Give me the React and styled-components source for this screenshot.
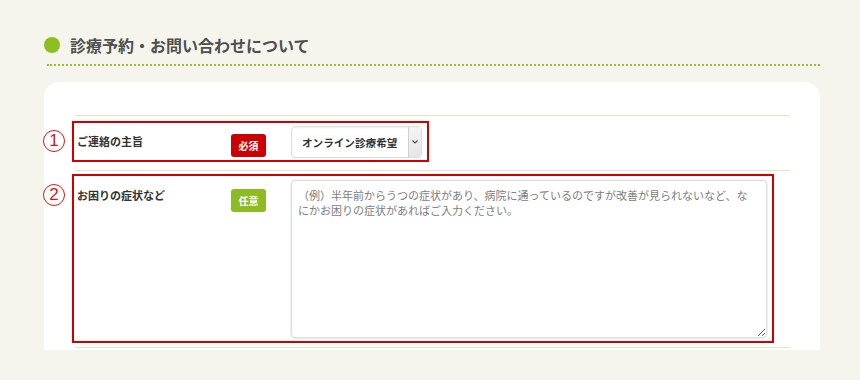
import React from 'react'
import styled, { createGlobalStyle } from 'styled-components'

const GlobalStyle = createGlobalStyle`
  body {
    margin: 0;
    background: #f5f4ed;
    font-family: "Noto Sans CJK JP", "Noto Sans", sans-serif;
    color: #333;
  }
`

const Page = styled.div`
  padding: 28px 40px 0 44px;
  width: 776px;
`

const Heading = styled.h2`
  display: flex;
  align-items: center;
  gap: 10px;
  margin: 0;
  height: 34px;
  font-size: 16px;
  font-weight: 700;
  color: #4f4f4f;
`

const Dot = styled.span`
  width: 16px;
  height: 16px;
  border-radius: 50%;
  background: #8cbf1f;
  flex-shrink: 0;
`

const DottedRule = styled.div`
  margin: 2px 0 0 3px;
  border-top: 2px dotted #93c42a;
`

const Card = styled.div`
  margin-top: 16px;
  background: #fff;
  border-radius: 15px 15px 0 0;
  padding: 33px 30px 2px 31px;
`

const Row = styled.div`
  position: relative;
  border-top: 1px solid #dfe9bd;
  padding: ${p => p.$top}px 0 ${p => p.$bottom}px;

  &:last-child {
    border-bottom: 1px solid #dfe9bd;
  }
`

const Num = styled.span`
  position: absolute;
  left: -32px;
  top: ${p => p.$top}px;
  width: 20px;
  height: 20px;
  border: 1px solid #cc1b1b;
  border-radius: 50%;
  color: #cc1b1b;
  font-family: "Liberation Sans", sans-serif;
  font-size: 17px;
  line-height: 20px;
  text-align: center;
`

const Highlight = styled.div`
  display: inline-flex;
  align-items: flex-start;
  margin-left: -3px;
  padding: ${p => p.$padTop}px 5px ${p => p.$padBottom}px 3px;
  border: 2px solid #cc0000;
`

const Label = styled.div`
  width: 154px;
  padding-top: 7px;
  font-size: 11px;
  font-weight: 700;
  color: #333;
  line-height: 16px;
`

const BadgeCell = styled.div`
  width: 60px;
  padding-top: ${p => p.$top}px;
`

const Badge = styled.span`
  display: inline-flex;
  align-items: center;
  justify-content: center;
  width: 35px;
  height: 23px;
  border-radius: 3px;
  background: ${p => (p.$required ? '#cc0000' : '#8cbc22')};
  color: #fff;
  font-size: 10px;
  font-weight: 700;
`

const SelectBox = styled.div`
  display: flex;
  width: 131px;
  height: 32px;
  box-sizing: border-box;
  border: 1px solid #dcdcdc;
  border-radius: 4px;
  background: #fff;
  box-shadow: inset 0 1px 2px rgba(0, 0, 0, 0.06);
  overflow: hidden;
`

const Select = styled.select`
  flex: 1;
  min-width: 0;
  appearance: none;
  border: none;
  background: transparent;
  padding: 0 0 0 10px;
  font-family: "Noto Sans CJK JP", sans-serif;
  font-size: 10.6px;
  font-weight: 700;
  color: #333;
  outline: none;
`

const Arrow = styled.span`
  display: flex;
  align-items: center;
  justify-content: center;
  width: 12px;
  border-left: 1px solid #d0d0d0;
  background: linear-gradient(#f4f4f4, #e6e6e6);
`

const TextArea = styled.textarea`
  display: block;
  width: 476px;
  height: 158px;
  box-sizing: border-box;
  margin: 0;
  padding: 7px 12px 7px 6px;
  border: 1px solid #dedede;
  border-radius: 4px;
  box-shadow: 0 0 0 1px #f1f1f1;
  font-family: "Noto Sans CJK JP", sans-serif;
  font-size: 11px;
  line-height: 15px;
  color: #333;
  outline: none;

  &::placeholder {
    color: #7d7d7d;
  }
`

const App = () => {
    return (
        <>
            <GlobalStyle />
            <Page>
                <Heading>
                    <Dot />
                    診療予約・お問い合わせについて
                </Heading>
                <DottedRule />
                <Card>
                    <Row $top={5} $bottom={8}>
                        <Num $top={14}>1</Num>
                        <Highlight $padTop={3} $padBottom={2}>
                            <Label>ご連絡の主旨</Label>
                            <BadgeCell $top={5}>
                                <Badge $required>必須</Badge>
                            </BadgeCell>
                            <SelectBox>
                                <Select defaultValue="online">
                                    <option value="online">オンライン診療希望</option>
                                </Select>
                                <Arrow>
                                    <svg width="6" height="4" viewBox="0 0 6 4">
                                        <path d="M0.5 0.5 L3 3 L5.5 0.5" fill="none" stroke="#555" strokeWidth="1.2" />
                                    </svg>
                                </Arrow>
                            </SelectBox>
                        </Highlight>
                    </Row>
                    <Row $top={3} $bottom={4}>
                        <Num $top={13}>2</Num>
                        <Highlight $padTop={4} $padBottom={3}>
                            <Label>お困りの症状など</Label>
                            <BadgeCell $top={6}>
                                <Badge>任意</Badge>
                            </BadgeCell>
                            <TextArea placeholder="（例）半年前からうつの症状があり、病院に通っているのですが改善が見られないなど、なにかお困りの症状があればご入力ください。" />
                        </Highlight>
                    </Row>
                </Card>
            </Page>
        </>
    )
}

export default App
